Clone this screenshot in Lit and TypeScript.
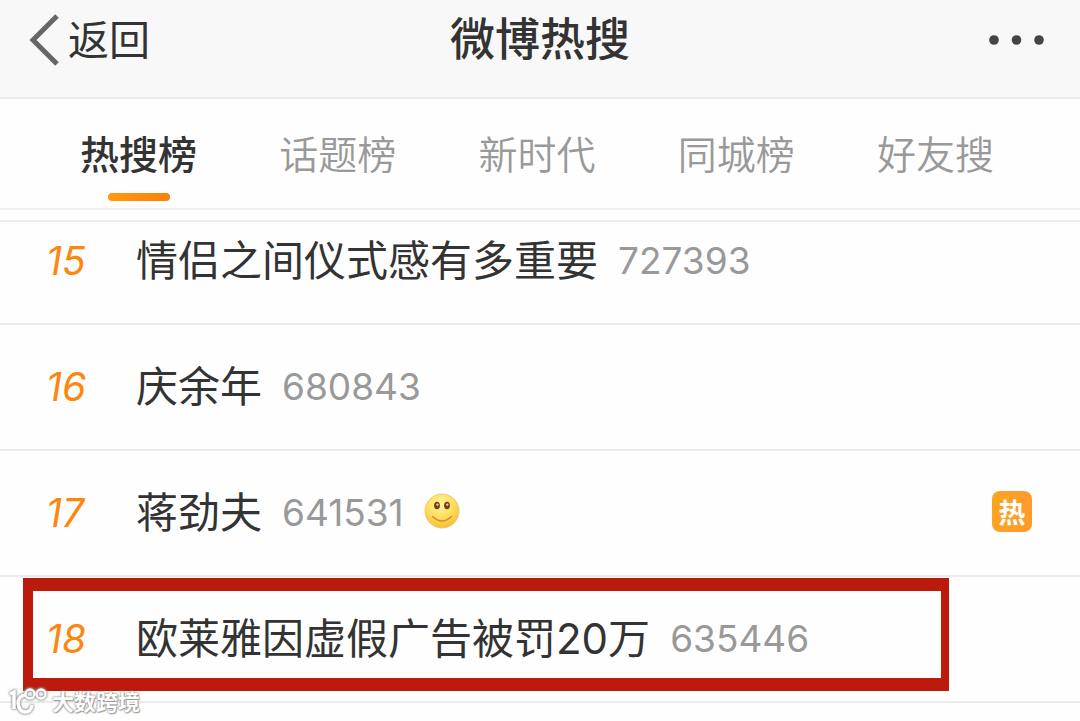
import { LitElement, html, css, svg, nothing } from "lit";
import { customElement, property, state } from "lit/decorators.js";

interface Topic {
  rank: number;
  title: string;
  heat: number;
  smile?: boolean;
  hot?: boolean;
  marked?: boolean;
}

const TABS = ["热搜榜", "话题榜", "新时代", "同城榜", "好友搜"];

const TOPICS: Topic[] = [
  { rank: 15, title: "情侣之间仪式感有多重要", heat: 727393 },
  { rank: 16, title: "庆余年", heat: 680843 },
  { rank: 17, title: "蒋劲夫", heat: 641531, smile: true, hot: true },
  { rank: 18, title: "欧莱雅因虚假广告被罚20万", heat: 635446, marked: true },
];

const smile = svg`
  <svg class="smile" viewBox="0 0 36 36" role="img" aria-label="微笑">
    <defs>
      <radialGradient id="face" cx="45%" cy="30%" r="72%">
        <stop offset="0" stop-color="#fff3a0" />
        <stop offset="0.55" stop-color="#fddf5c" />
        <stop offset="1" stop-color="#f5bb38" />
      </radialGradient>
    </defs>
    <circle cx="18" cy="18" r="17" fill="url(#face)" stroke="#eec069" stroke-width="0.8" />
    <ellipse cx="13" cy="12.5" rx="2.9" ry="3.8" fill="#7a3d0c" />
    <ellipse cx="23" cy="12.5" rx="2.9" ry="3.8" fill="#7a3d0c" />
    <circle cx="13.4" cy="11.6" r="1.2" fill="#e3cfae" />
    <circle cx="23.2" cy="11.6" r="1.2" fill="#e3cfae" />
    <path d="M8.5 23.5 Q18 32.5 27.5 23.5" fill="none" stroke="#d98d24" stroke-width="1.5" stroke-linecap="round" />
  </svg>`;

@customElement("topic-row")
export class TopicRow extends LitElement {
  @property({ attribute: false }) topic!: Topic;

  static styles = css`
    :host {
      display: block;
    }
    .row {
      position: relative;
      display: flex;
      align-items: center;
      box-sizing: border-box;
      height: 126px;
      padding: 0 48px 0 46px;
      border-bottom: 2px solid #ebebeb;
    }
    .rank {
      flex: none;
      width: 90px;
      color: #fd860f;
      font: italic 400 39px/48px Inter, sans-serif;
    }
    .title {
      color: #333;
      font-size: 42px;
      line-height: 60px;
      text-decoration: none;
      white-space: nowrap;
    }
    .heat {
      margin-left: 20px;
      color: #999;
      font: 400 37px/48px Inter, sans-serif;
    }
    .smile {
      width: 36px;
      height: 36px;
      margin: 0 0 4px 20px;
    }
    .hot {
      display: grid;
      place-items: center;
      width: 40px;
      height: 41px;
      margin: 0 0 4px auto;
      border-radius: 8px;
      background: linear-gradient(90deg, #fba51f, #fd9a2c);
      color: #fff;
      font-size: 27px;
      font-weight: 700;
      line-height: 41px;
      font-family: "Noto Sans CJK SC", sans-serif;
    }
    .mark {
      position: absolute;
      inset: 1px 131px 10px 23px;
      border: solid #bb1a0c;
      border-width: 13px 8px 13px 10px;
      pointer-events: none;
    }
  `;

  render() {
    const t = this.topic;
    return html`
      <div class="row">
        <span class="rank">${t.rank}</span>
        <a class="title" href="#">${t.title}</a>
        <span class="heat">${t.heat}</span>
        ${t.smile ? smile : nothing}
        ${t.hot ? html`<span class="hot">热</span>` : nothing}
        ${t.marked ? html`<div class="mark"></div>` : nothing}
      </div>
    `;
  }
}

@customElement("app-root")
export class AppRoot extends LitElement {
  @state() private active = 0;

  static styles = css`
    :host {
      position: relative;
      display: flex;
      flex-direction: column;
      height: 100vh;
      overflow: hidden;
      background: #fefefe;
      color: #333;
      font-family: Inter, "Noto Sans CJK SC", sans-serif;
    }
    button {
      margin: 0;
      padding: 0;
      border: 0;
      background: none;
      color: inherit;
      font: inherit;
      cursor: pointer;
    }
    .header {
      flex: none;
      display: grid;
      grid-template-columns: 1fr auto 1fr;
      align-items: center;
      padding: 9px 34px 26px 28px;
      border-bottom: 2px solid #ececec;
      background: #f8f8f8;
    }
    .back {
      display: flex;
      align-items: center;
      gap: 8px;
      justify-self: start;
      font-size: 41px;
      line-height: 62px;
    }
    .chevron {
      width: 32px;
      height: 52px;
    }
    .heading {
      margin: 0;
      padding-left: 6px;
      font-size: 45px;
      font-weight: 500;
      line-height: 62px;
    }
    .more {
      display: flex;
      justify-self: end;
    }
    .dots {
      width: 58px;
      height: 12px;
    }
    .tabs {
      flex: none;
      display: flex;
      justify-content: space-between;
      padding: 27px 86px 7px 80px;
      border-bottom: 2px solid #f0f0f0;
    }
    .tab {
      display: flex;
      flex-direction: column;
      align-items: center;
      gap: 9px;
      color: #999;
      font-size: 39px;
      font-weight: 350;
      line-height: 58px;
    }
    .tab::after {
      content: "";
      width: 62px;
      height: 8px;
      border-radius: 4px;
    }
    .tab.active {
      color: #333;
      font-weight: 500;
    }
    .tab.active::after {
      background: linear-gradient(90deg, #ff9a0c, #fd7f0c);
    }
    .strip {
      flex: none;
      height: 10px;
      border-bottom: 2px solid #ebebeb;
    }
    .viewport {
      flex: 1;
      min-height: 0;
      overflow: hidden;
    }
    .list {
      margin: -23px 0 0;
      padding: 0;
      list-style: none;
    }
    .watermark {
      position: absolute;
      left: 8px;
      bottom: 4px;
      display: flex;
      align-items: center;
      gap: 4px;
      color: #fff;
      font-size: 22px;
      font-weight: 700;
      line-height: 30px;
      text-shadow: 0 0 2px #888, 0 0 2px #999, 1px 1px 1px #aaa;
    }
    .logo {
      width: 40px;
      height: 30px;
      filter: drop-shadow(0 0 1px #888) drop-shadow(0 0 1px #aaa);
    }
  `;

  render() {
    return html`
      <header class="header">
        <button class="back">
          <svg class="chevron" viewBox="0 0 32 52" aria-hidden="true">
            <path d="M29 2 L5 26 L29 50" fill="none" stroke="#666" stroke-width="5" />
          </svg>
          返回
        </button>
        <h1 class="heading">微博热搜</h1>
        <button class="more" aria-label="更多">
          <svg class="dots" viewBox="0 0 58 12" aria-hidden="true" fill="#444">
            <circle cx="6" cy="6" r="4.8" />
            <circle cx="28.5" cy="6" r="4.8" />
            <circle cx="51" cy="6" r="4.8" />
          </svg>
        </button>
      </header>
      <nav class="tabs">
        ${TABS.map(
          (name, i) => html`
            <button class="tab ${i === this.active ? "active" : ""}" @click=${() => (this.active = i)}>
              ${name}
            </button>
          `,
        )}
      </nav>
      <div class="strip"></div>
      <main class="viewport">
        <ul class="list">
          ${TOPICS.map((t) => html`<li><topic-row .topic=${t}></topic-row></li>`)}
        </ul>
      </main>
      <div class="watermark">
        <svg class="logo" viewBox="0 0 40 30" aria-hidden="true" fill="none" stroke="#fff" stroke-width="3.4">
          <path d="M2 7 L6 5 V22" />
          <path d="M17 8 A8 8 0 0 0 10 16 Q11 25 17 25 Q23 25 24 18" />
          <circle cx="22" cy="7" r="4.5" stroke-width="2.4" />
          <circle cx="33" cy="7" r="4.5" stroke-width="2.4" />
        </svg>
        <span>大数跨境</span>
      </div>
    `;
  }
}
